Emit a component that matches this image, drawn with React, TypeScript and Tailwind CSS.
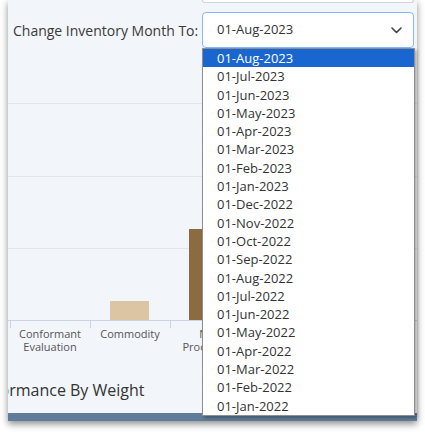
import React from 'react';

const months = [
  '01-Aug-2023',
  '01-Jul-2023',
  '01-Jun-2023',
  '01-May-2023',
  '01-Apr-2023',
  '01-Mar-2023',
  '01-Feb-2023',
  '01-Jan-2023',
  '01-Dec-2022',
  '01-Nov-2022',
  '01-Oct-2022',
  '01-Sep-2022',
  '01-Aug-2022',
  '01-Jul-2022',
  '01-Jun-2022',
  '01-May-2022',
  '01-Apr-2022',
  '01-Mar-2022',
  '01-Feb-2022',
  '01-Jan-2022',
];

const Chart: React.FC = () => (
  <svg width="409" height="228" className="mt-[52px] block">
    <line x1="0" x2="409" y1="3.5" y2="3.5" stroke="#e2e5e9" />
    <line x1="0" x2="409" y1="76.5" y2="76.5" stroke="#e2e5e9" />
    <line x1="0" x2="409" y1="148.5" y2="148.5" stroke="#e2e5e9" />
    <rect x="102" y="201" width="39" height="19" fill="#dcc5a3" />
    <rect x="181" y="129" width="40" height="91" fill="#8b6b40" />
    <line x1="0" x2="409" y1="220.5" y2="220.5" stroke="#c9d5e6" />
    {[2.5, 82.5, 162.5, 242.5, 322.5].map((x) => (
      <line key={x} x1={x} x2={x} y1="220" y2="228" stroke="#c9d5e6" />
    ))}
  </svg>
);

export default function App() {
  return (
    <div className="h-[437px] w-[425px] bg-white pl-2 font-['Open_Sans',sans-serif]">
      <div className="relative flex h-[421px] w-[409px] flex-col bg-[#f2f5f9] shadow-[0_3px_7px_rgba(0,0,0,0.45)]">
        <div className="ml-[194px] h-[3px] w-[212px] rounded-b border-x border-b border-[#ced4da] bg-white" />

        <div className="mt-[9px] flex items-center">
          <label className="ml-[5px] w-[189px] text-[14px] text-[#3a3a3a]">Change Inventory Month To:</label>
          <div className="flex h-[36px] w-[212px] items-center justify-between rounded border border-[#86b7fe] bg-white pl-[14px] pr-[11px] text-[13px] text-[#333]">
            <span>01-Aug-2023</span>
            <svg width="11" height="7" viewBox="0 0 11 7" fill="none">
              <path d="M1 1l4.5 4.5L10 1" stroke="#444" strokeWidth="1.6" strokeLinecap="round" strokeLinejoin="round" />
            </svg>
          </div>
        </div>

        <Chart />

        <div className="mt-[-1px] flex pl-[2px] text-[11px] font-medium leading-[13px] text-[#555]">
          <div className="w-[80px] text-center">Conformant<br />Evaluation</div>
          <div className="w-[80px] text-center">Commodity</div>
          <div className="w-[80px] text-center">Non<br />Processing</div>
        </div>

        <div className="mt-[26px] overflow-hidden">
          <h2 className="ml-[-39px] whitespace-nowrap text-[16px] leading-[22px] text-[#333]">Performance By Weight</h2>
        </div>

        <div className="mt-auto h-[8px] bg-[#5f7d99]" />

        <ul className="absolute left-[194px] top-[48px] w-[213px] border border-[#8f8f8f] bg-white shadow-[2px_2px_3px_rgba(0,0,0,0.3)]">
          {months.map((m, i) => (
            <li
              key={m}
              className={
                i === 0
                  ? 'h-[18.3px] bg-[#1a66d1] pl-[14px] text-[13px] leading-[18.3px] text-white'
                  : 'h-[18.3px] pl-[14px] text-[13px] leading-[18.3px] text-[#333]'
              }
            >
              {m}
            </li>
          ))}
        </ul>
      </div>
    </div>
  );
}
